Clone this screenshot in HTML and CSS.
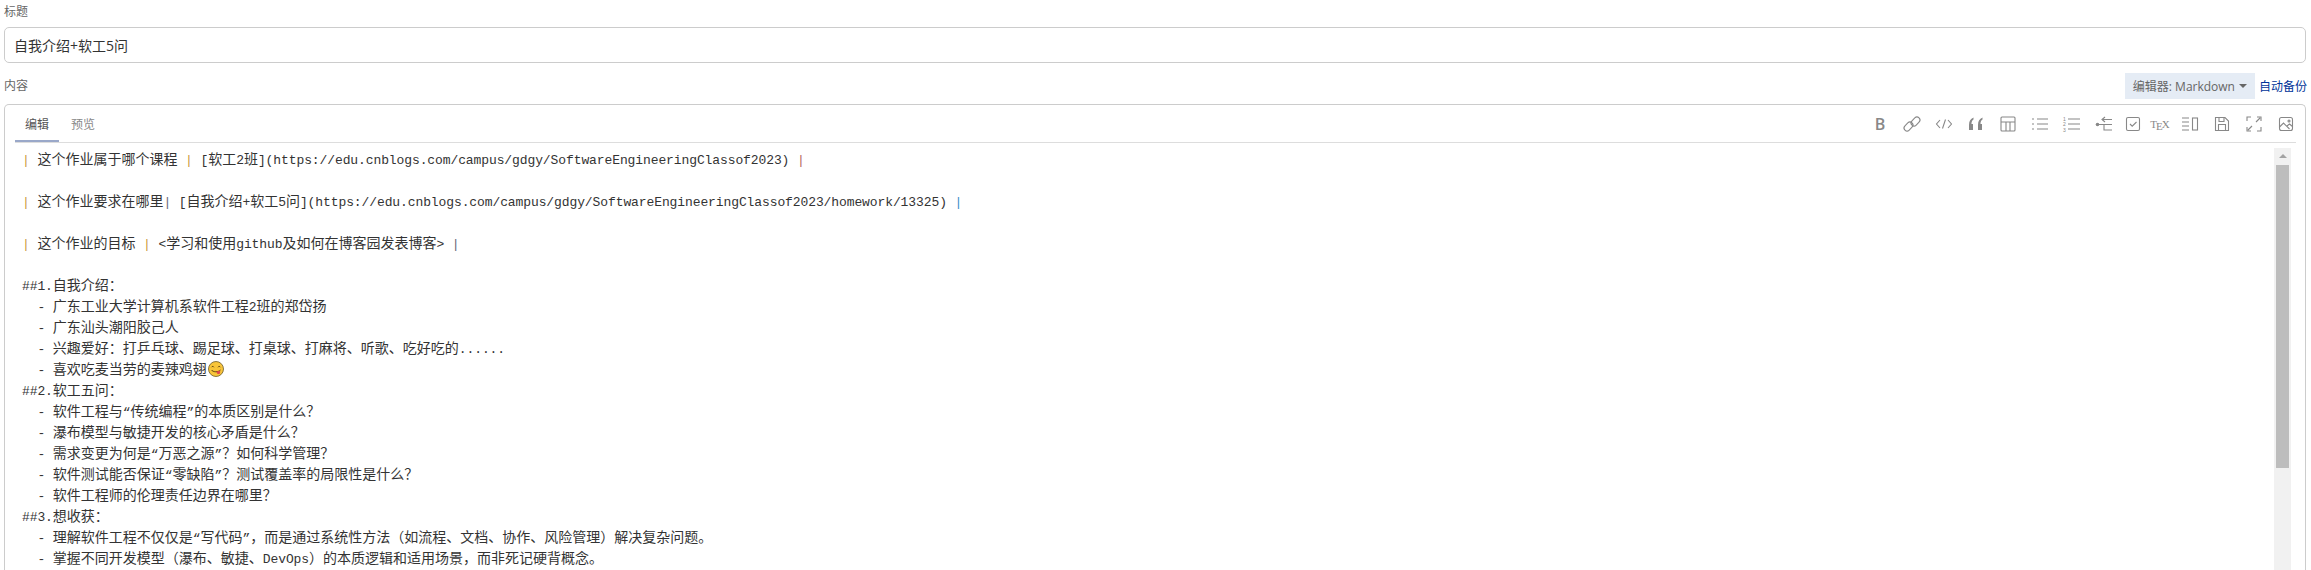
FILE: index.html
```html
<!DOCTYPE html>
<html lang="zh-CN">
<head>
  <meta charset="UTF-8">
  <title>编辑随笔</title>
  <link rel="stylesheet" href="styles.css">
</head>
<body>
  <div class="field-label">标题</div>
  <input class="title-input" type="text" value="自我介绍+软工5问">

  <div class="content-head">
    <span class="field-label">内容</span>
    <div class="head-actions">
      <button class="editor-switch">编辑器: Markdown<span class="caret"></span></button>
      <a class="auto-backup" href="#">自动备份</a>
    </div>
  </div>

  <div class="panel">
    <div class="tab-bar">
      <a class="tab active" href="#">编辑</a>
      <a class="tab" href="#">预览</a>
      <div class="toolbar">
        <span class="tool tool-b">B</span>
        <svg class="tool" viewBox="0 0 20 20"><rect x="1.5" y="9.5" width="10" height="6" rx="3" transform="rotate(-45 6.5 12.5)"/><rect x="8.5" y="4.5" width="10" height="6" rx="3" transform="rotate(-45 13.5 7.5)"/></svg>
        <svg class="tool" viewBox="0 0 20 20"><path d="M6 6 2.500 10 6 14M14 6l3.500 4L14 14M11.500 5.500l-3 9"/></svg>
        <svg class="tool" viewBox="0 0 20 20"><path class="solid" d="M3 16v-5c0-4 1.500-6 4.500-7.500v2C6 6.500 5.500 8 5.500 10h1.500v6zM12 16v-5c0-4 1.500-6 4.500-7.500v2C15 6.500 14.500 8 14.500 10h1.500v6z"/></svg>
        <svg class="tool" viewBox="0 0 20 20"><rect x="3" y="3" width="14" height="14" rx="1"/><path d="M3 8h14M8 8v9M12 8v9"/></svg>
        <svg class="tool" viewBox="0 0 20 20"><path d="M7 5h11M7 10h11M7 15h11M2 5h2M2 10h2M2 15h2"/></svg>
        <svg class="tool" viewBox="0 0 20 20"><text x="1" y="6.500">1</text><text x="1" y="12">2</text><text x="1" y="17.500">3</text><path d="M6 5h12M6 10h12M6 15h12"/></svg>
        <svg class="tool" viewBox="0 0 20 20"><circle class="solid" cx="3.500" cy="10.500" r="1.800"/><path d="M3.500 10.500H18M8 5.500h10M11 3 8 5.500 11 8M10 10.500V16h8"/></svg>
        <svg class="tool tool-check" viewBox="0 0 20 20"><rect x="3.500" y="3.500" width="13" height="13" rx="1.500"/><path d="M7 10l2.200 2.200L13.500 8"/></svg>
        <span class="tool tool-tex">T<i>E</i>X</span>
        <svg class="tool tool-columns" viewBox="0 0 20 20"><path d="M2 4h7M2 8h7M2 12h7M2 16h7"/><rect x="12.500" y="4" width="5" height="12"/></svg>
        <svg class="tool" viewBox="0 0 20 20"><path d="M3.500 3.500h9.500l3.500 3.500v9.500h-13zM7 3.500V7.500h5V3.500M6.500 16.500v-6h7v6"/></svg>
        <svg class="tool" viewBox="0 0 20 20"><path d="M3 7V3h4M13 3h4v4M17 13v4h-4M7 17H3v-4M16 4l-4 4M4 16l4-4"/></svg>
        <svg class="tool" viewBox="0 0 20 20"><rect x="3.500" y="3.500" width="13" height="13" rx="2"/><path d="M3.500 13 7.500 9l6 6M11 12l2.500-2 3 2.500"/><circle cx="13" cy="7" r="1"/></svg>
      </div>
    </div>

    <div class="editor">
      <div class="code">
        <div class="line"><span class="p-o">|</span> <span class="cn">这个作业属于哪个课程</span> <span class="p-o">|</span> [<span class="cn">软工</span>2<span class="cn">班</span>](https://edu.cnblogs.com/campus/gdgy/SoftwareEngineeringClassof2023) <span class="p-r">|</span></div>
        <div class="line"></div>
        <div class="line"><span class="p-o">|</span> <span class="cn">这个作业要求在哪里</span><span class="p-g">|</span> [<span class="cn">自我介绍</span>+<span class="cn">软工</span>5<span class="cn">问</span>](https://edu.cnblogs.com/campus/gdgy/SoftwareEngineeringClassof2023/homework/13325) <span class="p-b">|</span></div>
        <div class="line"></div>
        <div class="line"><span class="p-o">|</span> <span class="cn">这个作业的目标</span> <span class="p-o">|</span> &lt;<span class="cn">学习和使用</span>github<span class="cn">及如何在博客园发表博客</span>&gt; <span class="p-g">|</span></div>
        <div class="line"></div>
        <div class="line">##1.<span class="cn">自我介绍：</span></div>
        <div class="line">  - <span class="cn">广东工业大学计算机系软件工程</span>2<span class="cn">班的郑岱扬</span></div>
        <div class="line">  - <span class="cn">广东汕头潮阳胶己人</span></div>
        <div class="line">  - <span class="cn">兴趣爱好：打乒乓球、踢足球、打桌球、打麻将、听歌、吃好吃的</span>......</div>
        <div class="line">  - <span class="cn">喜欢吃麦当劳的麦辣鸡翅</span><svg class="emoji" viewBox="0 0 16 16"><circle cx="8" cy="8" r="7.500" fill="#f8c53a" stroke="#6d5a2a" stroke-width=".8"/><path d="M3.500 6.200c.6-1 1.800-1 2.400 0M10 6.200c.6-1 1.800-1 2.400 0" fill="none" stroke="#5a3d10" stroke-width="1"/><path d="M3.500 9c1.500 2.200 6.500 2.500 9 0" fill="none" stroke="#5a3d10" stroke-width="1"/><path d="M8.500 10.500l3.500-.8c.6 2-.2 3.400-1.500 3.400s-2-1.200-2-2.600z" fill="#e0474c"/></svg></div>
        <div class="line">##2.<span class="cn">软工五问：</span></div>
        <div class="line">  - <span class="cn">软件工程与</span>“<span class="cn">传统编程</span>”<span class="cn">的本质区别是什么？</span></div>
        <div class="line">  - <span class="cn">瀑布模型与敏捷开发的核心矛盾是什么？</span></div>
        <div class="line">  - <span class="cn">需求变更为何是</span>“<span class="cn">万恶之源</span>”<span class="cn">？如何科学管理？</span></div>
        <div class="line">  - <span class="cn">软件测试能否保证</span>“<span class="cn">零缺陷</span>”<span class="cn">？测试覆盖率的局限性是什么？</span></div>
        <div class="line">  - <span class="cn">软件工程师的伦理责任边界在哪里？</span></div>
        <div class="line">##3.<span class="cn">想收获：</span></div>
        <div class="line">  - <span class="cn">理解软件工程不仅仅是</span>“<span class="cn">写代码</span>”<span class="cn">，而是通过系统性方法（如流程、文档、协作、风险管理）解决复杂问题。</span></div>
        <div class="line">  - <span class="cn">掌握不同开发模型（瀑布、敏捷、</span>DevOps<span class="cn">）的本质逻辑和适用场景，而非死记硬背概念。</span></div>
      </div>
      <div class="scrollbar">
        <div class="scroll-up"></div>
        <div class="scroll-thumb"></div>
      </div>
    </div>
  </div>
</body>
</html>
```

FILE: styles.css
```css
html, body {
  height: 570px;
  overflow: hidden;
}
body {
  margin: 0;
  padding: 3px 5px 0 4px;
  box-sizing: border-box;
  font-family: "Open Sans", "Noto Sans CJK SC", sans-serif;
  font-size: 12px;
  color: #333;
  background: #fff;
}
.field-label {
  line-height: 18px;
  color: #666;
}
.title-input {
  display: block;
  width: 100%;
  height: 36px;
  margin-top: 6px;
  padding: 0 9px;
  box-sizing: border-box;
  border: 1px solid #ccc;
  border-radius: 5px;
  font-family: inherit;
  font-size: 14px;
  color: #333;
}
.content-head {
  display: flex;
  justify-content: space-between;
  align-items: center;
  height: 26px;
  margin-top: 10px;
}
.head-actions {
  display: flex;
  align-items: center;
  gap: 4px;
  margin-right: -1px;
}
.editor-switch {
  display: flex;
  align-items: center;
  height: 26px;
  padding: 0 8px;
  border: 0;
  background: #e5ecf5;
  font-family: inherit;
  font-size: 12px;
  color: #666;
}
.caret {
  margin-left: 4px;
  border-top: 4px solid #666;
  border-left: 4px solid transparent;
  border-right: 4px solid transparent;
}
.auto-backup {
  color: #039;
  text-decoration: none;
}
.panel {
  height: 466px;
  margin-top: 5px;
  box-sizing: border-box;
  border: 1px solid #ccc;
  border-bottom: 0;
  border-radius: 5px 5px 0 0;
  overflow: hidden;
}
.tab-bar {
  display: flex;
  align-items: center;
  height: 37px;
  margin: 0 9px 0 10px;
  border-bottom: 1px solid #ddd;
}
.tab {
  align-self: stretch;
  width: 44px;
  margin-right: 2px;
  box-sizing: border-box;
  line-height: 40px;
  text-align: center;
  color: #888;
  text-decoration: none;
}
.tab.active {
  color: #555;
  height: 37px;
  border-bottom: 2px solid #9aa8c9;
}
.toolbar {
  display: flex;
  align-items: center;
  gap: 12px;
  margin-left: auto;
}
.tool {
  width: 20px;
  height: 20px;
  fill: none;
  stroke: #888;
  stroke-width: 1.100;
}
.tool .solid {
  fill: #888;
  stroke: none;
}
.tool text {
  font-size: 5px;
  font-family: "Liberation Sans", sans-serif;
  fill: #888;
  stroke: none;
}
.tool-b {
  font: 600 16px/20px "Open Sans", sans-serif;
  color: #888;
  text-align: center;
}
.tool-check {
  margin-left: -3px;
}
.tool-tex {
  margin-left: -5px;
  font: 11px/20px "Liberation Serif", serif;
  color: #888;
  text-align: center;
  white-space: nowrap;
}
.tool-tex i {
  font-style: normal;
  vertical-align: -2px;
  margin: 0 -1px;
}
.tool-columns {
  margin-left: -2px;
}
.editor {
  display: flex;
  justify-content: space-between;
  height: 428px;
}
.code {
  padding: 5px 0 0 17px;
  font-family: "Liberation Mono", monospace;
  font-size: 13px;
  letter-spacing: -0.1px;
  color: #333;
}
.line {
  height: 21px;
  line-height: 21px;
  white-space: pre;
}
.cn {
  font-family: "Noto Sans CJK SC", sans-serif;
  font-size: 14px;
  letter-spacing: 0;
}
.p-o { color: #c9963c; }
.p-r { color: #b5655f; }
.p-b { color: #3a8fc9; }
.p-g { color: #667; }
.emoji {
  width: 16px;
  height: 16px;
  margin-left: 1px;
  vertical-align: -3px;
}
.scrollbar {
  width: 17px;
  margin: 5px 14px 0 0;
  background: #f1f1f1;
}
.scroll-up {
  width: 0;
  height: 0;
  margin: 6px auto 7px;
  border-bottom: 4px solid #a3a3a3;
  border-left: 4px solid transparent;
  border-right: 4px solid transparent;
}
.scroll-thumb {
  width: 13px;
  height: 303px;
  margin: 0 auto;
  background: #bdbdbd;
}
```
